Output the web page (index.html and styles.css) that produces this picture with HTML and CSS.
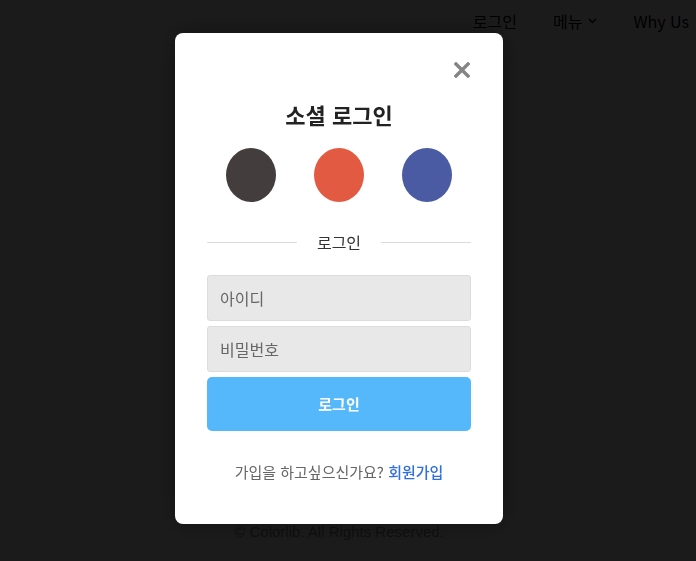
FILE: index.html
```html
<!DOCTYPE html>
<html lang="ko">
<head>
  <meta charset="UTF-8" />
  <meta name="viewport" content="width=device-width, initial-scale=1.0"/>
  <title>로그인</title>
  <link rel="stylesheet" href="styles.css">
</head>
<body>

  <div class="page">
    <header class="nav">
      <a href="#">로그인</a>
      <a href="#" class="dropdown">메뉴
        <svg width="9" height="6" viewBox="0 0 9 6"><path d="M1 1l3.5 3.5L8 1" fill="none" stroke="currentColor" stroke-width="1.5"/></svg>
      </a>
      <a href="#">Why Us</a>
    </header>
    <main class="content"></main>
    <footer class="footer">© Colorlib. All Rights Reserved.</footer>
  </div>

  <div class="overlay">
    <div class="modal">
      <div class="close-row">
        <button class="close" aria-label="닫기">
          <svg width="16" height="16" viewBox="0 0 16 16"><path d="M2 2L14 14M14 2L2 14" stroke="#858585" stroke-width="3.4" stroke-linecap="square"/></svg>
        </button>
      </div>

      <h2 class="modal-title">소셜 로그인</h2>

      <div class="social">
        <span class="social-btn dark"></span>
        <span class="social-btn red"></span>
        <span class="social-btn blue"></span>
      </div>

      <div class="divider"><span>로그인</span></div>

      <form class="login-form">
        <input type="text" placeholder="아이디">
        <input type="password" placeholder="비밀번호">
        <button type="button" class="submit">로그인</button>
      </form>

      <p class="signup">가입을 하고싶으신가요? <a href="#">회원가입</a></p>
    </div>
  </div>

</body>
</html>
```

FILE: styles.css
```css
html, body {
  margin: 0;
  padding: 0;
  height: 100%;
  overflow: hidden;
  font-family: "Noto Sans CJK KR", "Noto Sans", sans-serif;
  background: white;
}

.page {
  display: flex;
  flex-direction: column;
  height: 100%;
}

.nav {
  display: flex;
  justify-content: flex-end;
  align-items: center;
  gap: 36px;
  height: 42px;
  padding-right: 7px;
}

.nav a {
  color: #000;
  text-decoration: none;
  font-size: 16px;
  display: flex;
  align-items: center;
  gap: 6px;
}

.content {
  flex: 1;
}

.footer {
  text-align: center;
  font-family: "Liberation Sans", sans-serif;
  font-size: 15px;
  line-height: 20px;
  color: #8a8a8a;
  padding: 0 18px 19px 0;
}

.overlay {
  position: fixed;
  top: 0;
  left: 0;
  width: 100%;
  height: 100%;
  background: rgba(0, 0, 0, 0.894);
}

.modal {
  position: absolute;
  top: 33px;
  left: 175px;
  width: 264px;
  padding: 25px 32px 42px;
  background: white;
  border-radius: 8px;
  box-shadow: 0 0 24px rgba(0, 0, 0, 0.35);
}

.close-row {
  display: flex;
  justify-content: flex-end;
  height: 24px;
}

.close {
  border: none;
  background: none;
  padding: 4px 1px 4px 4px;
  cursor: pointer;
  line-height: 0;
}

.modal-title {
  margin: 18px 0 0;
  text-align: center;
  font-size: 22px;
  line-height: 28px;
  font-weight: bold;
  color: #222;
}

.social {
  display: flex;
  justify-content: center;
  gap: 38px;
  margin-top: 20px;
}

.social-btn {
  width: 50px;
  height: 54px;
  border-radius: 50%;
}

.social-btn.dark { background: #433e3d; }
.social-btn.red { background: #e35a42; }
.social-btn.blue { background: #4a5ba3; }

.divider {
  display: flex;
  align-items: center;
  margin-top: 30px;
  height: 20px;
  font-size: 16px;
  color: #333;
}

.divider::before,
.divider::after {
  content: "";
  flex: 1;
  height: 1px;
  background: #dcdcdc;
}

.divider span {
  margin: 0 20px;
}

.login-form {
  display: flex;
  flex-direction: column;
  gap: 5px;
  margin-top: 23px;
}

.login-form input {
  height: 46px;
  box-sizing: border-box;
  border: 1px solid #dcdcdc;
  border-radius: 3px;
  background: #e8e8e8;
  padding: 0 12px;
  font-family: inherit;
  font-size: 16px;
  color: #333;
}

.login-form input::placeholder {
  color: #666;
}

.submit {
  height: 54px;
  border: none;
  border-radius: 5px;
  background: #54b8fa;
  color: white;
  font-family: inherit;
  font-size: 15px;
  font-weight: bold;
  cursor: pointer;
  padding-bottom: 3px;
}

.signup {
  margin: 31px 0 0;
  text-align: center;
  font-size: 15px;
  line-height: 20px;
  color: #666;
}

.signup a {
  color: #2f6fe0;
  text-decoration: none;
  font-weight: 500;
}
```
